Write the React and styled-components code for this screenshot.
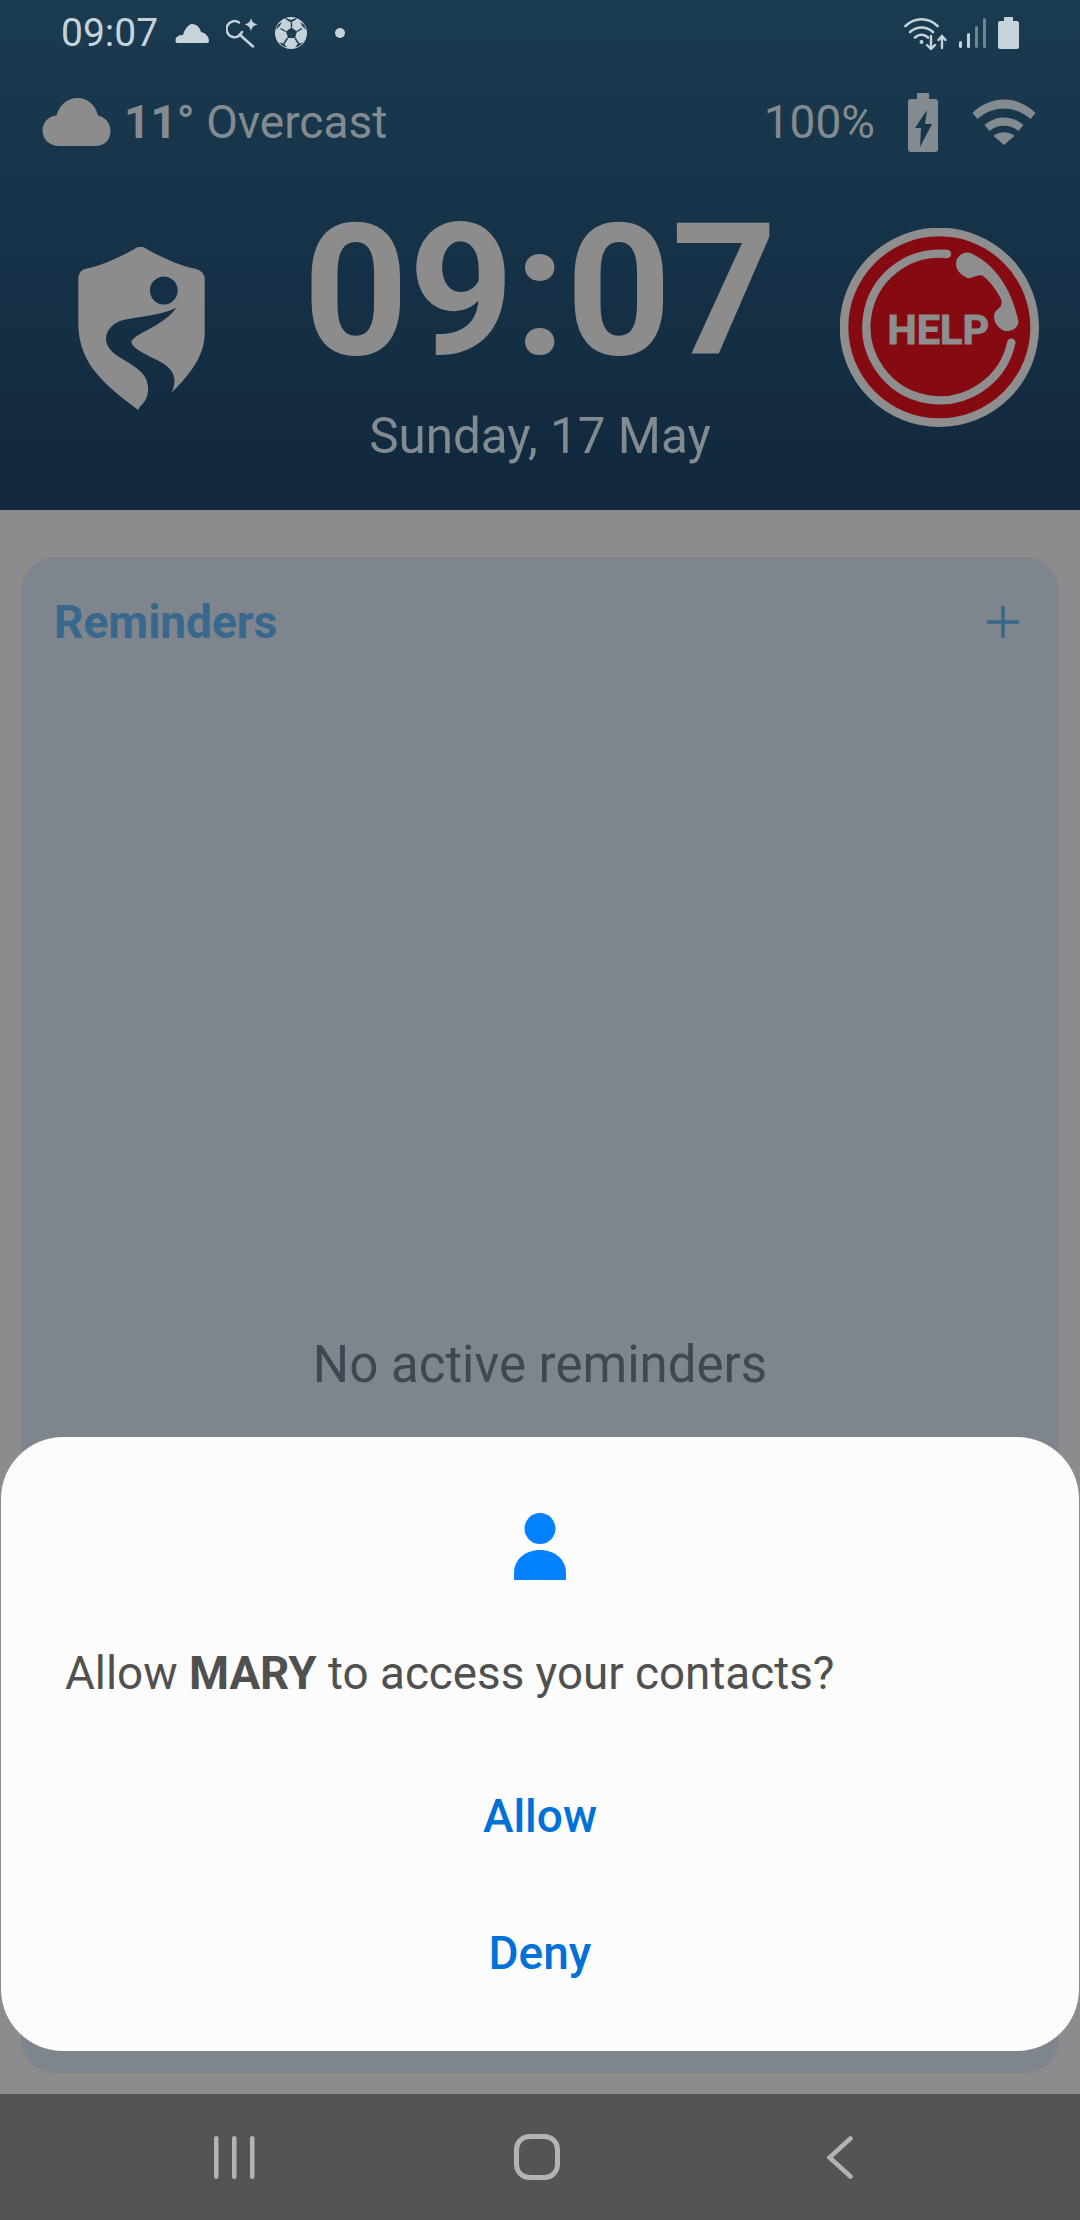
import React from 'react';
import styled, { createGlobalStyle } from 'styled-components';

const GlobalStyle = createGlobalStyle`
  html, body {
    margin: 0;
    padding: 0;
    background: #8c8c8c;
    font-family: Roboto, "Liberation Sans", sans-serif;
  }
`;

const Page = styled.div`
  position: relative;
  width: 1080px;
  height: 2220px;
  overflow: hidden;
  display: flex;
  flex-direction: column;
  background: #8c8c8c;
`;

const Header = styled.header`
  height: 510px;
  flex-shrink: 0;
  background: linear-gradient(180deg, #1b3b50 0%, #11283e 100%);
  display: flex;
  flex-direction: column;
`;

const StatusBar = styled.div`
  height: 66px;
  padding: 0 61px;
  display: flex;
  align-items: center;
  justify-content: space-between;
  color: #c6d3db;
`;

const StatusGroup = styled.div`
  display: flex;
  align-items: center;
  gap: ${props => props.$gap || 10}px;
  svg { display: block; flex-shrink: 0; }
`;

const StatusTime = styled.span`
  font-size: 39px;
  line-height: 66px;
`;

const StatusDot = styled.span`
  width: 10px;
  height: 10px;
  border-radius: 50%;
  background: #c6d3db;
  margin-left: 11px;
`;

const WeatherRow = styled.div`
  height: 112px;
  padding: 0 43px 0 41px;
  display: flex;
  align-items: center;
  justify-content: space-between;
  color: #848b90;
  font-size: 46px;
`;

const WeatherGroup = styled.div`
  display: flex;
  align-items: center;
  gap: ${props => props.$gap || 12}px;
  svg { display: block; }
`;

const Temperature = styled.span`
  font-weight: 700;
  color: #858b90;
`;

const ClockRow = styled.div`
  display: grid;
  grid-template-columns: 270px 540px 270px;
  align-items: start;
`;

const LogoSlot = styled.div`
  padding: 69px 0 0 78px;
  svg { display: block; }
`;

const ClockColumn = styled.div`
  display: flex;
  flex-direction: column;
  align-items: center;
`;

const BigTime = styled.div`
  font-size: 184px;
  line-height: 190px;
  font-weight: 700;
  color: #8c8c8c;
  margin-top: 18px;
`;

const DateLine = styled.div`
  font-size: 49.400px;
  line-height: 56px;
  color: #848b90;
  margin-top: 22px;
`;

const HelpSlot = styled.div`
  padding: 50px 41px 0 0;
  display: flex;
  justify-content: flex-end;
  svg { display: block; }
`;

const Body = styled.main`
  flex: 1;
  padding: 47px 21px 21px;
  display: flex;
`;

const Card = styled.section`
  flex: 1;
  background: #7e858c;
  border-radius: 34px;
  padding: 40px 40px 0 33px;
  display: flex;
  flex-direction: column;
`;

const CardHeader = styled.div`
  display: flex;
  align-items: center;
  justify-content: space-between;
`;

const CardTitle = styled.h2`
  margin: 0;
  font-size: 46px;
  line-height: 50px;
  font-weight: 700;
  color: #38688d;
`;

const EmptyText = styled.p`
  margin: 690px 0 0;
  text-align: center;
  padding-left: 7px;
  font-size: 51px;
  line-height: 56px;
  color: #40474f;
`;

const Sheet = styled.div`
  position: absolute;
  left: 1px;
  right: 1px;
  bottom: 169px;
  height: 614px;
  box-sizing: border-box;
  background: #fcfcfc;
  border-radius: 62px;
  padding-top: 76px;
  display: flex;
  flex-direction: column;
`;

const SheetIcon = styled.div`
  display: flex;
  justify-content: center;
  svg { display: block; }
`;

const SheetMessage = styled.p`
  margin: 62px 0 41px;
  padding: 0 64px;
  font-size: 45.750px;
  line-height: 64px;
  color: #505050;
  b { font-weight: 700; }
`;

const SheetButton = styled.button`
  display: block;
  width: 100%;
  height: 137px;
  border: 0;
  padding: 0;
  background: none;
  font-family: inherit;
  font-size: 46px;
  font-weight: 500;
  color: #0071d6;
`;

const NavBar = styled.nav`
  height: 126px;
  flex-shrink: 0;
  background: #545454;
  display: grid;
  grid-template-columns: repeat(3, 303px);
  justify-content: center;
  justify-items: center;
  align-items: center;
  padding-right: 6px;
  box-sizing: border-box;
  svg { display: block; }
`;

const StatusCloud = () => (
  <svg width="34" height="19" viewBox="0 0 34 19">
    <path fill="#c6d3db" d="M2 19C0 19 0 14 2 13c2-2 4-2 6-2C10 4 14 0 17 0c5 0 8 4 9 8 5 1 8 5 8 9 0 1-1 2-2 2z" />
  </svg>
);

const WeatherCloud = () => (
  <svg width="71" height="48" viewBox="0 0 68 48">
    <path fill="#8c8c8c" d="M16 48C7 48 0 41 0 32.500 0 24 6.500 18 14 17.500 17 7 25 0 35 0c10 0 18 6.500 20.500 17.500C62.500 19 68 25 68 33c0 9-6.500 15-15 15z" />
  </svg>
);

const SearchSpark = () => (
  <svg width="32" height="30" viewBox="0 0 32 30">
    <path fill="none" stroke="#c6d3db" strokeWidth="2.500" strokeLinecap="round" d="M13 4.500a8 8 0 1 0 3 9.500M13.500 16.500 27 28.500" />
    <path fill="#c6d3db" d="M25 0c1 4 2 5 6.500 6.500C27 8 26 9 25 13.500 24 9 23 8 18.500 6.500 23 5 24 4 25 0z" />
  </svg>
);

const SoccerBall = () => (
  <svg width="32" height="32" viewBox="0 0 32 32">
    <circle cx="16" cy="16" r="16" fill="#c6d3db" />
    <g fill="#1b3b50">
      <path d="M16.500 10.500l5.500 4-2 6.500h-7l-2-6.500z" />
      <path d="M10 .800l6 2.200 6-2.200-1 1.800-5 3-5-3z" />
      <path d="M.800 13l4 -4 2 -4-4 3z" />
      <path d="M31.200 13l-4-4-2-4 4 3z" />
      <path d="M4 25.500l5 1 3 4-4-1.500z" />
      <path d="M28 25.500l-5 1-3 4 4-1.500z" />
    </g>
    <path fill="none" stroke="#1b3b50" strokeWidth="1.400" d="M16.500 10.500V5.500M22 14.500l5-3M20 21l3.500 5.500M12.500 21 9 26.500M10.500 14.500l-5-3" />
  </svg>
);

const StatusWifi = () => (
  <svg width="43" height="33" viewBox="0 0 43 33" fill="none" stroke="#c6d3db" strokeWidth="2.600" strokeLinecap="round">
    <path d="M1.500 9C11 0 24 0 33.500 9" />
    <path d="M6 15c7-6 16-6 23 0" />
    <path d="M11 20.500c4-3.500 9-3.500 13 0" />
    <circle cx="17.500" cy="25" r="2" fill="#c6d3db" stroke="none" />
    <path strokeWidth="2.400" d="M27 19v13M23 28l4 4 4-4M38 31V19M34.500 23l3.500-4 3.500 4" />
  </svg>
);

const StatusSignal = () => (
  <svg width="27" height="30" viewBox="0 0 27 30">
    <rect x="0" y="23" width="3" height="7" rx="1.500" fill="#c6d3db" />
    <rect x="8" y="15" width="3" height="15" rx="1.500" fill="#c6d3db" />
    <rect x="16" y="8" width="3" height="22" rx="1.500" fill="#6e8694" />
    <rect x="24" y="0" width="3" height="30" rx="1.500" fill="#6e8694" />
  </svg>
);

const StatusBattery = () => (
  <svg width="21" height="32" viewBox="0 0 21 32">
    <path fill="#c6d3db" d="M6 0h9v4h4c1 0 2 1 2 2v24c0 1-1 2-2 2H2c-1 0-2-1-2-2V6c0-1 1-2 2-2h4z" />
  </svg>
);

const ChargingBattery = () => (
  <svg width="30" height="59" viewBox="0 0 30 59">
    <path fill="#848b90" fillRule="evenodd" d="M9 0h12v6h6c2 0 3 1 3 3v47c0 2-1 3-3 3H3c-2 0-3-1-3-3V9c0-2 1-3 3-3h6zM19 17 7 35h6l-1 19 12-23h-7z" />
  </svg>
);

const WeatherWifi = () => (
  <svg width="66" height="46" viewBox="0 0 63 46">
    <g fill="#848b90">
      <path d="M0 14C18-4 45-4 63 14l-5 6C43 6 20 6 5 20z" />
      <path d="M12 26c11-10 28-10 39 0l-5 6c-8-7-21-7-29 0z" />
      <path d="M21 37c6-5 15-5 21 0l-10.500 9z" />
    </g>
  </svg>
);

const ShieldLogo = () => (
  <svg width="127" height="163" viewBox="115 110 380 490">
    <path
      fill="#8c8c8c"
      fillRule="evenodd"
      d="M295 600C210 535 115 470 115 340V205c0-15 10-28 25-30 55-12 110-40 150-63 8-4 16-4 24 0 40 23 95 51 150 63 15 2 31 15 31 30v165c0 70-50 130-100 178 20-40 5-70-25-88-30-18-90-40-95-62-3-25 100-50 135-106-40 25-150 30-175 43-35 18-45 50-30 75 20 35 85 50 110 90 15 25 15 65-15 90zM372 199a42 42 0 1 0 .1 0z"
    />
  </svg>
);

const HelpBadge = () => (
  <svg width="199" height="199" viewBox="57 52 597 597">
    <circle cx="355" cy="350" r="286" fill="#860a12" stroke="#8e8e8e" strokeWidth="26" />
    <path fill="none" stroke="#8e8e8e" strokeWidth="25" strokeLinecap="round" d="M378 130A220 220 0 1 0 571 396" />
    <path fill="#8e8e8e" d="M405 160c0-25 25-40 45-32 70 32 120 102 142 202 3 20-22 35-42 30-25-10-40-40-25-60 15-10 20-20 15-35-15-30-35-55-55-70-15-5-25 5-40 8-20-3-40-23-40-43z" />
    <text x="352" y="399" textAnchor="middle" fontFamily="Roboto, sans-serif" fontWeight="700" fontSize="124" fill="#8e8e8e" stroke="#8e8e8e" strokeWidth="3">HELP</text>
  </svg>
);

const PersonIcon = () => (
  <svg width="52" height="67" viewBox="0 0 52 67">
    <ellipse cx="26" cy="15.500" rx="15.500" ry="15.500" fill="#0381fe" />
    <path fill="#0381fe" d="M0 67v-7C0 46 12 37 26 37s26 9 26 23v7z" />
  </svg>
);

const RecentsIcon = () => (
  <svg width="41" height="43" viewBox="0 0 41 43" fill="#b3b3b3">
    <rect x="0" y="0" width="4.500" height="43" rx="2.200" />
    <rect x="18" y="0" width="4.500" height="43" rx="2.200" />
    <rect x="36" y="0" width="4.500" height="43" rx="2.200" />
  </svg>
);

const HomeIcon = () => (
  <svg width="46" height="46" viewBox="0 0 46 46">
    <rect x="2.500" y="2.500" width="41" height="41" rx="13" fill="none" stroke="#b3b3b3" strokeWidth="5" />
  </svg>
);

const BackIcon = () => (
  <svg width="26" height="43" viewBox="0 0 26 43">
    <path fill="none" stroke="#b3b3b3" strokeWidth="4.500" strokeLinecap="round" strokeLinejoin="miter" d="M23.500 2.500 2.500 21.500l21 19" />
  </svg>
);

const PlusIcon = () => (
  <svg width="32" height="32" viewBox="0 0 32 32">
    <path fill="none" stroke="#38688d" strokeWidth="3.500" d="M16 0v32M0 16h32" />
  </svg>
);

const App = () => (
  <Page>
    <GlobalStyle />
    <Header>
      <StatusBar>
        <StatusGroup $gap={17}>
          <StatusTime>09:07</StatusTime>
          <StatusCloud />
          <SearchSpark />
          <SoccerBall />
          <StatusDot />
        </StatusGroup>
        <StatusGroup $gap={12}>
          <StatusWifi />
          <StatusSignal />
          <StatusBattery />
        </StatusGroup>
      </StatusBar>
      <WeatherRow>
        <WeatherGroup>
          <WeatherCloud />
          <span><Temperature>11°</Temperature> Overcast</span>
        </WeatherGroup>
        <WeatherGroup $gap={33}>
          <span>100%</span>
          <ChargingBattery />
          <WeatherWifi />
        </WeatherGroup>
      </WeatherRow>
      <ClockRow>
        <LogoSlot><ShieldLogo /></LogoSlot>
        <ClockColumn>
          <BigTime>09:07</BigTime>
          <DateLine>Sunday, 17 May</DateLine>
        </ClockColumn>
        <HelpSlot><HelpBadge /></HelpSlot>
      </ClockRow>
    </Header>
    <Body>
      <Card>
        <CardHeader>
          <CardTitle>Reminders</CardTitle>
          <PlusIcon />
        </CardHeader>
        <EmptyText>No active reminders</EmptyText>
      </Card>
    </Body>
    <NavBar>
      <RecentsIcon />
      <HomeIcon />
      <BackIcon />
    </NavBar>
    <Sheet>
      <SheetIcon><PersonIcon /></SheetIcon>
      <SheetMessage>Allow <b>MARY</b> to access your contacts?</SheetMessage>
      <SheetButton>Allow</SheetButton>
      <SheetButton>Deny</SheetButton>
    </Sheet>
  </Page>
);

export default App;
